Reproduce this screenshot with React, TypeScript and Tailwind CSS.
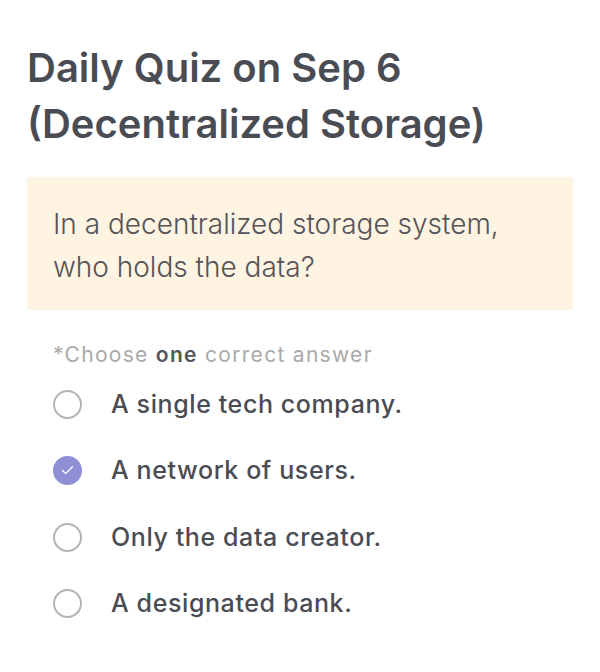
import { Check } from "lucide-react";

const OPTIONS = [
  { label: "A single tech company.", checked: false },
  { label: "A network of users.", checked: true },
  { label: "Only the data creator.", checked: false },
  { label: "A designated bank.", checked: false },
];

function Radio({ checked }: { checked: boolean }) {
  if (checked) {
    return (
      <div className="w-[29px] h-[29px] rounded-full bg-[#8e8fd4] flex items-center justify-center shrink-0">
        <Check size={15} strokeWidth={2.2} className="text-white" />
      </div>
    );
  }
  return <div className="w-[29px] h-[29px] rounded-full border-2 border-[#b4b4b4] shrink-0" />;
}

export default function App() {
  return (
    <div
      className="w-[600px] h-[672px] bg-white px-[27px] pt-[40px]"
      style={{ fontFamily: "Inter, 'Noto Sans', sans-serif" }}
    >
      <h1 className="text-[40px] leading-[56px] font-semibold text-[#4a4c54]">
        Daily Quiz on Sep 6
        <br />
        (Decentralized Storage)
      </h1>

      <div className="mt-[25px] bg-[#fff3e1] rounded-[3px] px-[26px] pt-[26px] pb-[21px]">
        <p className="text-[28px] leading-[43px] font-light text-[#555459]">
          In a decentralized storage system,
          <br />
          who holds the data?
        </p>
      </div>

      <p className="mt-[31px] ml-[26px] text-[21px] leading-[28px] tracking-[1.3px] text-[#a9a9a9]">
        *Choose <span className="font-semibold text-[#55565c]">one</span> correct answer
      </p>

      <div className="mt-[2px] flex flex-col">
        {OPTIONS.map((o) => (
          <div key={o.label} className="h-[66.5px] flex items-center pl-[26px] gap-[29px]">
            <Radio checked={o.checked} />
            <span className="text-[25px] font-medium text-[#4a4c54] tracking-[0.6px]">{o.label}</span>
          </div>
        ))}
      </div>
    </div>
  );
}
